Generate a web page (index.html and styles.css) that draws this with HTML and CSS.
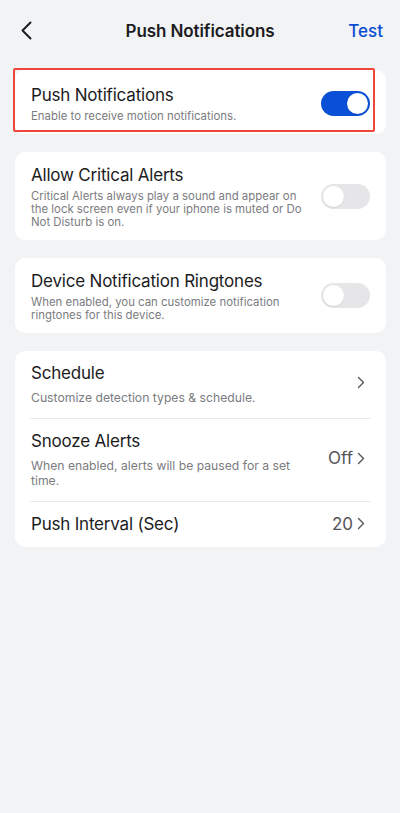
FILE: index.html
```html
<!DOCTYPE html>
<html>
<head>
<meta charset="utf-8">
<link rel="stylesheet" href="styles.css">
</head>
<body>
<div class="screen">
  <header class="nav">
    <div class="nav-side">
      <svg class="back" width="12" height="19" viewBox="0 0 12 19"><path d="M10.5 1.5 L2.5 9.5 L10.5 17.5" fill="none" stroke="#1c1c1e" stroke-width="2" stroke-linecap="round" stroke-linejoin="round"/></svg>
    </div>
    <div class="nav-title">Push Notifications</div>
    <div class="nav-side nav-right"><span class="nav-action">Test</span></div>
  </header>

  <main class="list">
    <section class="card card-first">
      <div class="toggle-row">
        <div class="texts">
          <div class="title">Push Notifications</div>
          <div class="sub">Enable to receive motion notifications.</div>
        </div>
        <div class="switch on"><span class="knob"></span></div>
      </div>
      <div class="highlight"></div>
    </section>

    <section class="card">
      <div class="toggle-row">
        <div class="texts">
          <div class="title">Allow Critical Alerts</div>
          <div class="sub">Critical Alerts always play a sound and appear on the lock screen even if your iphone is muted or Do Not Disturb is on.</div>
        </div>
        <div class="switch"><span class="knob"></span></div>
      </div>
    </section>

    <section class="card">
      <div class="toggle-row">
        <div class="texts">
          <div class="title">Device Notification Ringtones</div>
          <div class="sub">When enabled, you can customize notification ringtones for this device.</div>
        </div>
        <div class="switch"><span class="knob"></span></div>
      </div>
    </section>

    <section class="card card-list">
      <div class="nav-row">
        <div class="texts">
          <div class="title">Schedule</div>
          <div class="sub2">Customize detection types &amp; schedule.</div>
        </div>
        <div class="value">
          <svg class="chev" width="8" height="13" viewBox="0 0 8 13"><path d="M1.5 1.5 L6.5 6.5 L1.5 11.5" fill="none" stroke="#555" stroke-width="1.4" stroke-linecap="round" stroke-linejoin="round"/></svg>
        </div>
      </div>
      <div class="nav-row">
        <div class="texts">
          <div class="title">Snooze Alerts</div>
          <div class="sub2">When enabled, alerts will be paused for a set time.</div>
        </div>
        <div class="value"><span>Off</span>
          <svg class="chev" width="8" height="13" viewBox="0 0 8 13"><path d="M1.5 1.5 L6.5 6.5 L1.5 11.5" fill="none" stroke="#555" stroke-width="1.4" stroke-linecap="round" stroke-linejoin="round"/></svg>
        </div>
      </div>
      <div class="nav-row last">
        <div class="texts">
          <div class="title">Push Interval (Sec)</div>
        </div>
        <div class="value"><span>20</span>
          <svg class="chev" width="8" height="13" viewBox="0 0 8 13"><path d="M1.5 1.5 L6.5 6.5 L1.5 11.5" fill="none" stroke="#555" stroke-width="1.4" stroke-linecap="round" stroke-linejoin="round"/></svg>
        </div>
      </div>
    </section>
  </main>
</div>
</body>
</html>
```

FILE: styles.css
```css
* { box-sizing: border-box; }
html, body { margin: 0; padding: 0; }
body {
  background: #f2f3f5;
  font-family: Inter, "Noto Sans", "Liberation Sans", sans-serif;
  color: #1c1c1e;
  width: 400px;
  min-height: 813px;
}
.screen { min-height: 813px; }

.nav {
  height: 62px;
  display: flex;
  align-items: center;
  padding: 0 16px;
}
.nav-side { width: 64px; display: flex; align-items: center; }
.nav-right { justify-content: flex-end; }
.back { display: block; margin-top: -1px; margin-left: 4px; }
.nav-title {
  flex: 1;
  text-align: center;
  font-size: 17px;
  font-weight: 600;
  letter-spacing: -0.1px;
}
.nav-action { color: #0a4fd3; font-size: 17px; font-weight: 500; margin-right: 1px; }

.list {
  padding: 8px 14px 0 15px;
  display: flex;
  flex-direction: column;
  gap: 18px;
}
.card {
  background: #fff;
  border-radius: 10px;
  position: relative;
}
.toggle-row {
  display: flex;
  align-items: center;
  padding: 11px 16px 11px 16px;
  gap: 14px;
}
.card-first .toggle-row { padding-top: 13px; }
.texts { flex: 1; min-width: 0; }
.title {
  font-size: 17px;
  line-height: 24px;
  letter-spacing: -0.2px;
  color: #1c1c1e;
}
.sub {
  margin-top: 3px;
  font-size: 11.4px;
  line-height: 13px;
  color: #7b7b80;
}
.sub2 {
  margin-top: 4.6px;
  font-size: 12.2px;
  line-height: 15px;
  color: #7b7b80;
}
.switch {
  flex: none;
  width: 49px;
  height: 25px;
  border-radius: 13px;
  background: #e6e6e8;
  position: relative;
}
.switch .knob {
  position: absolute;
  top: 2px;
  left: 2px;
  width: 21px;
  height: 21px;
  border-radius: 50%;
  background: #fff;
  box-shadow: 0 1px 2px rgba(0,0,0,0.08);
}
.switch.on { background: #0a50d6; }
.switch.on .knob { left: auto; right: 2px; }

.highlight {
  position: absolute;
  left: -2px;
  top: -2px;
  right: 11px;
  bottom: 2px;
  border: 2px solid #ef463c;
  border-radius: 2px;
  pointer-events: none;
}

.nav-row {
  display: flex;
  align-items: center;
  margin: 0 15px;
  padding: 10px 6px 13.4px 1px;
  border-bottom: 1px solid #e8e8ea;
}
.nav-row.last { border-bottom: none; padding-bottom: 11px; }
.value {
  display: flex;
  align-items: center;
  gap: 4px;
  font-size: 17px;
  color: #555558;
  flex: none;
  margin-left: 12px;
}
.chev { display: block; }
```
